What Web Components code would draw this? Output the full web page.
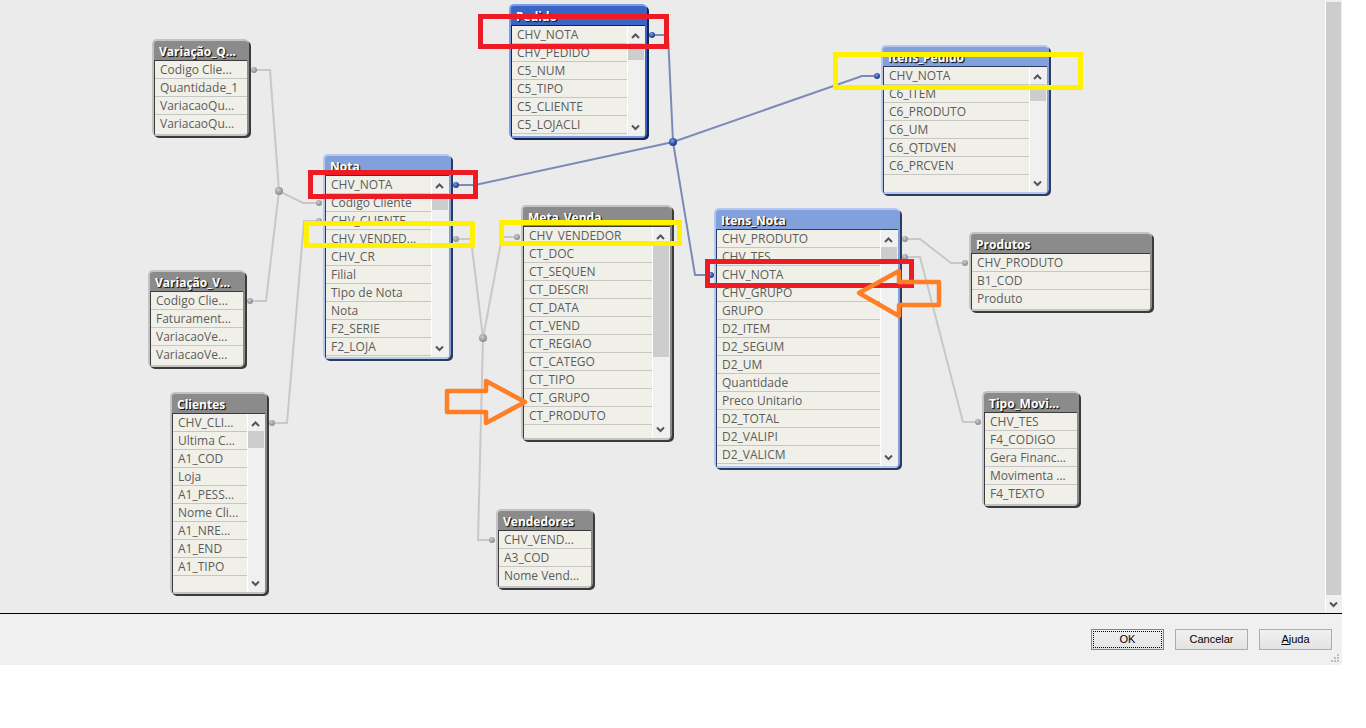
<!DOCTYPE html>
<html lang="pt-BR">
<head>
<meta charset="utf-8">
<title>Visualizador de tabelas</title>
<style>
  html, body { height: 100%; margin: 0; background: #fff; }
  body { font-family: "Open Sans", "Noto Sans", sans-serif; box-sizing: border-box; padding: 0 24px 63px 0; }
</style>
</head>
<body>
<table-viewer></table-viewer>
<script>
class ScrollTrack extends HTMLElement {
  connectedCallback() {
    const thumb = this.getAttribute('thumb') || '17';
    this.attachShadow({ mode: 'open' }).innerHTML = `
      <style>
        :host { display: flex; flex-direction: column; width: 16px; flex: none; background: #f0f0f0; border-left: 1px solid #fff; box-sizing: content-box; }
        svg { display: block; width: 16px; height: 17px; flex: none; fill: none; stroke: #555; stroke-width: 2; }
        .thumb { background: #cdcdcd; ${thumb === 'fill' ? 'flex: 1;' : `height: ${thumb}px;`} }
        .rest { ${thumb === 'fill' ? 'display: none;' : 'flex: 1;'} }
        .end { padding-bottom: 1px; }
        :host([page]) .start { display: none; }
        :host([page]) .thumb { margin: 2px 1px 0 0; }
      </style>
      <svg class="start" viewBox="0 0 16 17"><path d="M4 12 7.500 8.500 11 12"/></svg>
      <div class="thumb"></div><div class="rest"></div>
      <svg class="end" viewBox="0 0 16 17"><path d="M4 7.500 7.500 11 11 7.500"/></svg>`;
  }
}
customElements.define('scroll-track', ScrollTrack);

class TableCard extends HTMLElement {
  connectedCallback() {
    const fields = this.getAttribute('fields').split('|');
    const thumb = this.getAttribute('thumb');
    this.attachShadow({ mode: 'open' }).innerHTML = `
      <style>
        :host { display: flex; --light: #c3c3c3; --head: #8b8b8b; --dark: #3b3b3b; }
        :host([tone="linked"]) { --light: #b4c7f0; --head: #81a0dc; --dark: #2c3b5e; }
        :host([tone="active"]) { --light: #7c9de6; --head: #3a64c8; --dark: #15244d; }
        section { flex: 1; min-width: 0; display: flex; flex-direction: column; margin: 0 2px 2px 0; background: var(--head);
          border: solid var(--light); border-width: 2px 0 0 2px; border-radius: 5px; box-shadow: 2px 2px 0 var(--dark); }
        h2 { margin: 0; padding: 2px 0 0 5px; height: 17px; font: bold 12px/17px "Open Sans", "Noto Sans", sans-serif; color: #fff;
          text-shadow: 1px 1px 0 #222, 1px 1px 1px #222; white-space: nowrap; }
        .body { flex: 1; min-height: 0; display: flex; margin-right: 2px; background: #f0f0e8; border: solid var(--dark); border-width: 1px 0 0 1px;
          border-bottom: 2px solid var(--light); border-radius: 0 0 3px 3px; overflow: hidden; }
        ul { flex: 1; min-width: 0; margin: 0; padding: 0; list-style: none; overflow: hidden; }
        li { height: 17px; padding-left: 5px; border-bottom: 1px solid #c6c6c6; font-size: 12px; line-height: 17px; color: #5c5c5c; white-space: nowrap; }
        :host(:not([thumb])) li:last-child { border-bottom: 0; }
        scroll-track { margin-right: 1px; }
      </style>
      <section>
        <h2>${this.getAttribute('name')}</h2>
        <div class="body">
          <ul>${fields.map(f => `<li>${f}</li>`).join('')}</ul>
          ${thumb ? `<scroll-track thumb="${thumb}"></scroll-track>` : ''}
        </div>
      </section>`;
  }
}
customElements.define('table-card', TableCard);

class LinkLayer extends HTMLElement {
  connectedCallback() {
    const dot = (kind, r) => ([x, y]) => `<circle cx="${x}" cy="${y}" r="${r}" fill="url(#${kind})"/>`;
    this.attachShadow({ mode: 'open' }).innerHTML = `
      <style>
        :host { display: block; }
        svg { display: block; width: 100%; height: 100%; overflow: hidden; }
        .wire { fill: none; stroke: #c8c8c8; stroke-width: 2; }
        .wire.on { stroke: #7c8bb6; }
      </style>
      <svg aria-hidden="true">
        <defs>
          <radialGradient id="off" cx=".4" cy=".35" r=".65"><stop offset="0" stop-color="#cfcfcf"/><stop offset=".5" stop-color="#a8a8a8"/><stop offset="1" stop-color="#8c8c8c"/></radialGradient>
          <radialGradient id="on" cx=".4" cy=".35" r=".65"><stop offset="0" stop-color="#86a8e8"/><stop offset=".5" stop-color="#3a61b4"/><stop offset="1" stop-color="#1e3c80"/></radialGradient>
        </defs>
        <path class="wire" d="M254 70H270L279 191M250 301H266L279 191L303 203H319M319 221H304L287 423H272M456 239H471L483 338L502 237H517M483 338L478 540H492M905 239H920L951 263H965M905 257H920L963 422H978"/>
        <path class="wire on" d="M652 35H668L673 142M456 185H475L673 142L862 76H877M673 142L695 275H711"/>
        ${[[254,70],[250,301],[319,203],[319,221],[272,423],[456,239],[517,237],[492,540],[905,239],[965,263],[905,257],[978,422]].map(dot('off', 3)).join('')}
        ${[[279,191],[483,338]].map(dot('off', 4)).join('')}
        ${[[652,35],[456,185],[877,76],[711,275]].map(dot('on', 3)).join('')}
        ${dot('on', 4)([673,142])}
      </svg>`;
  }
}
customElements.define('link-layer', LinkLayer);

class MarkLayer extends HTMLElement {
  connectedCallback() {
    // Each box is x, y, width, height of the outer edge of the marker stroke.
    const box = colour => ([x, y, w, h]) =>
      `<path d="M${x} ${y}h${w}v${h}h${-w}zM${x + 5} ${y + 5}v${h - 10}h${w - 10}v${10 - h}z" fill="${colour}"/>`;
    this.attachShadow({ mode: 'open' }).innerHTML = `
      <style>
        :host { display: block; pointer-events: none; }
        svg { display: block; width: 100%; height: 100%; }
        .arrow { fill: none; stroke: #ff7f27; stroke-width: 4.500; stroke-linejoin: round; }
      </style>
      <svg aria-hidden="true">
        ${[[478,14,191,35],[308,170,170,29],[705,259,209,29]].map(box('#ed1c24')).join('')}
        ${[[833,52,250,38],[304,221,171,27],[499,220,183,26]].map(box('#fff200')).join('')}
        <path class="arrow" d="M447 391H486V381L525 402L486 423V412H447z"/>
        <path class="arrow" d="M939 282H899V271L859 293L899 316V305H939z"/>
      </svg>`;
  }
}
customElements.define('mark-layer', MarkLayer);

class SchemaBoard extends HTMLElement {
  connectedCallback() {
    const cards = [
      { n: 'Variação_Q...', x: 152, y: 39, w: 99, h: 99, f: 'Codigo Clie...|Quantidade_1|VariacaoQu...|VariacaoQu...' },
      { n: 'Nota', x: 323, y: 154, w: 130, h: 207, t: 'linked', s: 17, f: 'CHV_NOTA|Codigo Cliente|CHV_CLIENTE|CHV_VENDED...|CHV_CR|Filial|Tipo de Nota|Nota|F2_SERIE|F2_LOJA' },
      { n: 'Variação_V...', x: 148, y: 270, w: 99, h: 99, f: 'Codigo Clie...|Faturament...|VariacaoVe...|VariacaoVe...' },
      { n: 'Clientes', x: 170, y: 392, w: 99, h: 204, s: 17, f: 'CHV_CLI...|Ultima C...|A1_COD|Loja|A1_PESS...|Nome Cli...|A1_NRE...|A1_END|A1_TIPO' },
      { n: 'Pedido', x: 509, y: 4, w: 140, h: 136, t: 'active', s: 17, f: 'CHV_NOTA|CHV_PEDIDO|C5_NUM|C5_TIPO|C5_CLIENTE|C5_LOJACLI' },
      { n: 'Itens_Pedido', x: 881, y: 45, w: 170, h: 151, t: 'linked', s: 17, f: 'CHV_NOTA|C6_ITEM|C6_PRODUTO|C6_UM|C6_QTDVEN|C6_PRCVEN' },
      { n: 'Meta_Venda', x: 521, y: 205, w: 153, h: 237, s: 113, f: 'CHV_VENDEDOR|CT_DOC|CT_SEQUEN|CT_DESCRI|CT_DATA|CT_VEND|CT_REGIAO|CT_CATEGO|CT_TIPO|CT_GRUPO|CT_PRODUTO' },
      { n: 'Itens_Nota', x: 714, y: 208, w: 188, h: 262, t: 'linked', s: 17, f: 'CHV_PRODUTO|CHV_TES|CHV_NOTA|CHV_GRUPO|GRUPO|D2_ITEM|D2_SEGUM|D2_UM|Quantidade|Preco Unitario|D2_TOTAL|D2_VALIPI|D2_VALICM' },
      { n: 'Produtos', x: 969, y: 232, w: 185, h: 81, f: 'CHV_PRODUTO|B1_COD|Produto' },
      { n: 'Tipo_Movi...', x: 982, y: 391, w: 99, h: 117, f: 'CHV_TES|F4_CODIGO|Gera Financ...|Movimenta ...|F4_TEXTO' },
      { n: 'Vendedores', x: 496, y: 509, w: 99, h: 81, f: 'CHV_VEND...|A3_COD|Nome Vend...' }
    ];
    this.attachShadow({ mode: 'open' }).innerHTML = `
      <style>
        :host { display: block; position: relative; overflow: hidden; background: #ebebeb; }
        link-layer, mark-layer { position: absolute; inset: 0; }
        table-card { position: absolute; }
      </style>
      <link-layer></link-layer>
      ${cards.map(c => `<table-card name="${c.n}" fields="${c.f}" ${c.t ? `tone="${c.t}"` : ''} ${c.s ? `thumb="${c.s}"` : ''}
        style="left:${c.x}px;top:${c.y}px;width:${c.w}px;height:${c.h}px"></table-card>`).join('')}
      <mark-layer></mark-layer>`;
  }
}
customElements.define('schema-board', SchemaBoard);

class DialogButton extends HTMLElement {
  connectedCallback() {
    this.attachShadow({ mode: 'open' }).innerHTML = `
      <style>
        :host { display: block; }
        button { display: block; width: 73px; height: 21px; padding: 1px; background: linear-gradient(#f0f0f0, #e3e3e3); border: 1px solid #acacac;
          border-radius: 0; font: 11px/15px "Liberation Sans", Arial, sans-serif; color: #000; }
        span { display: block; border: 1px solid transparent; }
        :host([default]) button { border-color: #3399ff; }
        :host([default]) span { border: 1px dotted #000; }
      </style>
      <button type="button"><span><slot></slot></span></button>`;
  }
}
customElements.define('dialog-button', DialogButton);

class TableViewer extends HTMLElement {
  connectedCallback() {
    this.attachShadow({ mode: 'open' }).innerHTML = `
      <style>
        :host { display: flex; flex-direction: column; height: 100%; }
        main { flex: 1; display: flex; min-height: 0; }
        schema-board { flex: 1; min-width: 0; }
        footer { display: flex; justify-content: flex-end; gap: 11px; padding: 15px 10px 15px; border-top: 1px solid #000; background: #f0f0f0; position: relative; }
        .grip { position: absolute; right: 3px; bottom: 3px; width: 8px; height: 8px; fill: #bfbfbf; }
      </style>
      <main>
        <schema-board></schema-board>
        <scroll-track page thumb="fill"></scroll-track>
      </main>
      <footer>
        <dialog-button default>OK</dialog-button>
        <dialog-button>Cancelar</dialog-button>
        <dialog-button><u>A</u>juda</dialog-button>
        <svg class="grip" viewBox="0 0 8 8" aria-hidden="true"><path d="M6 0h2v2H6zM3 3h2v2H3zM6 3h2v2H6zM0 6h2v2H0zM3 6h2v2H3zM6 6h2v2H6z"/></svg>
      </footer>`;
  }
}
customElements.define('table-viewer', TableViewer);
</script>
</body>
</html>
